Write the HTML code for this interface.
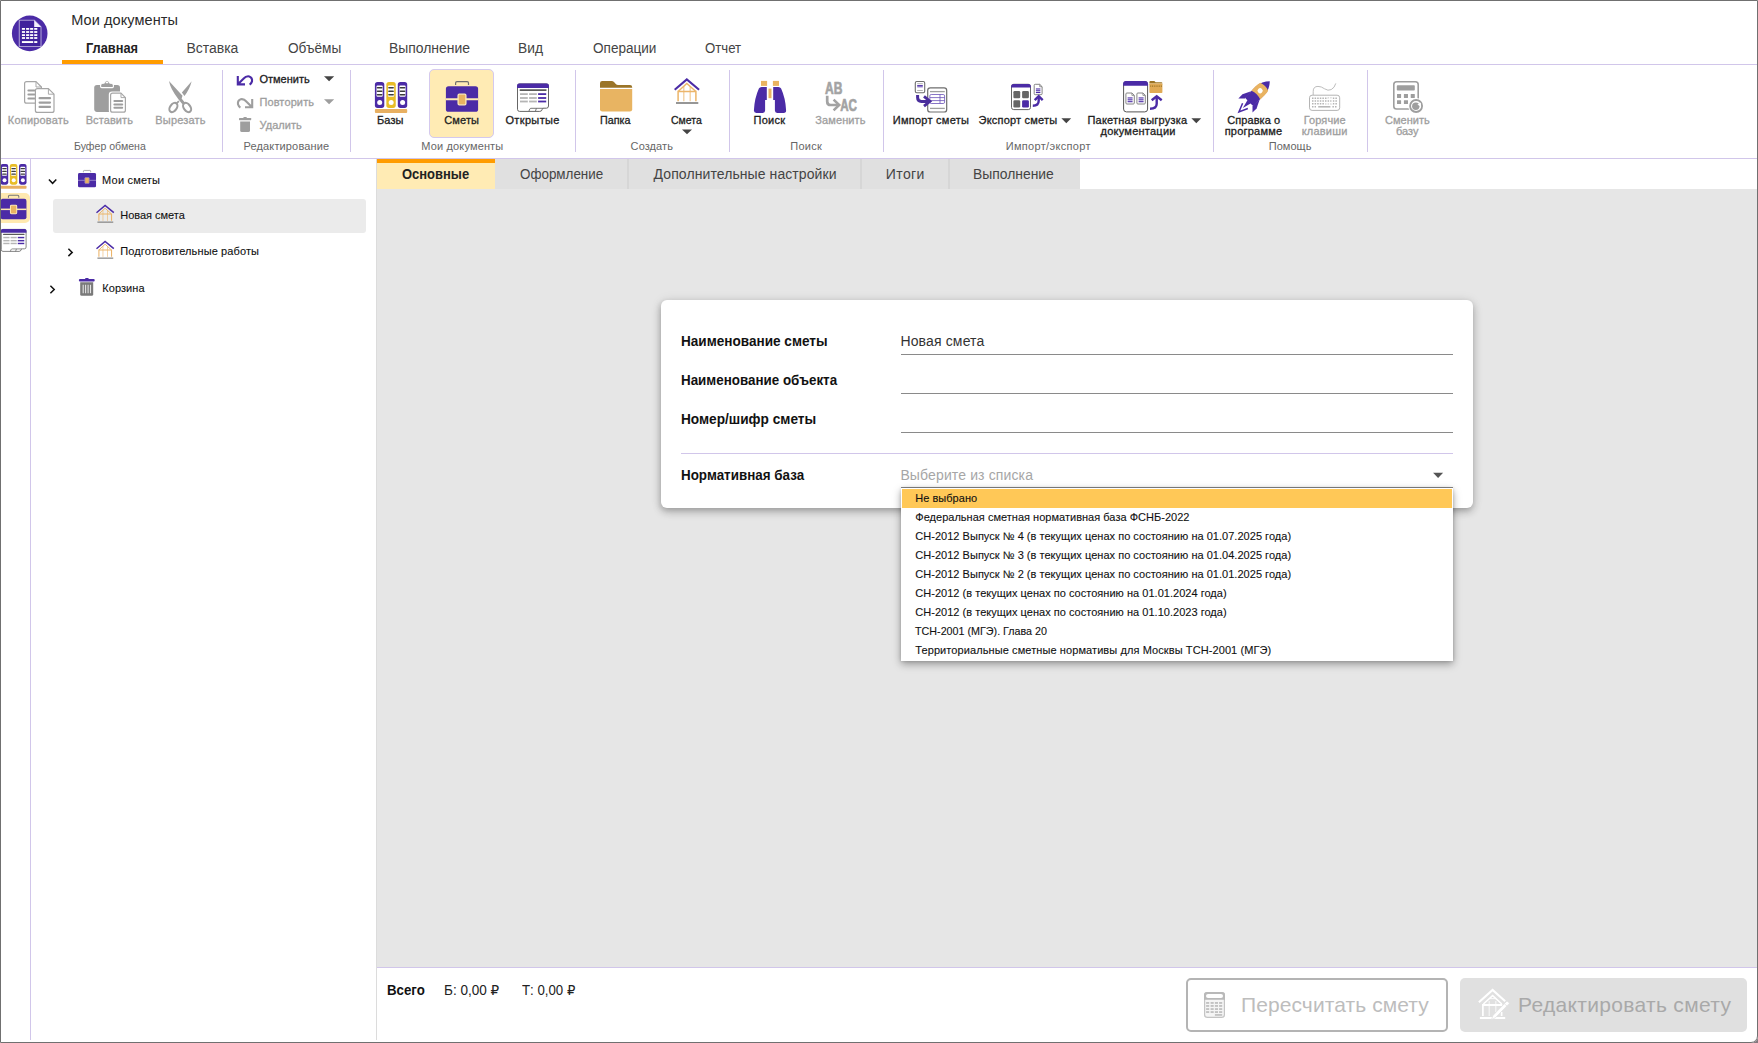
<!DOCTYPE html>
<html lang="ru"><head><meta charset="utf-8"><title>Мои документы</title><style>
html,body{margin:0;padding:0;background:#fff;}
body{width:1758px;height:1043px;position:relative;overflow:hidden;font-family:"Liberation Sans","DejaVu Sans",sans-serif;}
.t{position:absolute;white-space:nowrap;line-height:1;}
.b{position:absolute;box-sizing:border-box;}
</style></head><body>
<div class="b" style="left:1px;top:64px;width:1756px;height:1px;background:#d1c6ea"></div>
<div class="b" style="left:62px;top:60px;width:101px;height:4px;background:#ff9c00"></div>
<div class="b" style="left:1px;top:158px;width:1756px;height:1px;background:#d1c6ea"></div>
<div class="b" style="left:222px;top:70px;width:1px;height:82px;background:#d1c6ea"></div>
<div class="b" style="left:350px;top:70px;width:1px;height:82px;background:#d1c6ea"></div>
<div class="b" style="left:575px;top:70px;width:1px;height:82px;background:#d1c6ea"></div>
<div class="b" style="left:729px;top:70px;width:1px;height:82px;background:#d1c6ea"></div>
<div class="b" style="left:883px;top:70px;width:1px;height:82px;background:#d1c6ea"></div>
<div class="b" style="left:1213px;top:70px;width:1px;height:82px;background:#d1c6ea"></div>
<div class="b" style="left:1367px;top:70px;width:1px;height:82px;background:#d1c6ea"></div>
<div class="b" style="left:429px;top:69px;width:65px;height:69px;background:#ffebb4;border:1px solid #d4c9ee;border-radius:5px"></div>
<div class="b" style="left:30px;top:159px;width:1px;height:881px;background:#d1c6ea"></div>
<div class="b" style="left:1px;top:193px;width:29px;height:30px;background:#ffe9b0;border-radius:0 5px 5px 0"></div>
<div class="b" style="left:53px;top:199px;width:313px;height:34px;background:#ebebeb;border-radius:3px"></div>
<div class="b" style="left:376px;top:159px;width:1px;height:881px;background:#dcdcdc"></div>
<div class="b" style="left:377px;top:159px;width:703px;height:30px;background:#e0e0e0"></div>
<div class="b" style="left:377px;top:189px;width:1380px;height:778px;background:#e6e6e6"></div>
<div class="b" style="left:377px;top:159px;width:118px;height:30px;background:#ffebb4;border-top:4px solid #ff9c00"></div>
<div class="b" style="left:627px;top:159px;width:2px;height:30px;background:#d6d6d6"></div>
<div class="b" style="left:860px;top:159px;width:2px;height:30px;background:#d6d6d6"></div>
<div class="b" style="left:948px;top:159px;width:2px;height:30px;background:#d6d6d6"></div>
<div class="b" style="left:377px;top:967px;width:1380px;height:1px;background:#d1c6ea"></div>
<div class="b" style="left:661px;top:300px;width:812px;height:208px;background:#fff;border-radius:6px;box-shadow:0 4px 8px rgba(0,0,0,.21),0 1px 12px rgba(0,0,0,.10),-1px 2px 5px rgba(0,0,0,.09)"></div>
<div class="b" style="left:901px;top:354px;width:552px;height:1px;background:#8a8a8a"></div>
<div class="b" style="left:901px;top:393px;width:552px;height:1px;background:#8a8a8a"></div>
<div class="b" style="left:901px;top:432px;width:552px;height:1px;background:#8a8a8a"></div>
<div class="b" style="left:901px;top:487px;width:552px;height:1px;background:#8a8a8a"></div>
<div class="b" style="left:681px;top:453px;width:772px;height:1px;background:#d1c6ea"></div>
<div class="b" style="left:901px;top:488px;width:551.7px;height:172.6px;background:#fff;box-shadow:0 3px 8px rgba(0,0,0,.36),0 0 3px rgba(0,0,0,.16)"></div>
<div class="b" style="left:902px;top:488.7px;width:550.2px;height:19px;background:#ffc857"></div>
<div class="b" style="left:1186px;top:978px;width:262px;height:54px;border:2px solid #b4b4b4;border-radius:5px;background:#fff"></div>
<div class="b" style="left:1460px;top:978px;width:287px;height:54px;background:#e0e0e0;border-radius:5px"></div>
<svg class="b" style="left:0;top:0" width="1758" height="1043" viewBox="0 0 1758 1043"><defs><clipPath id="sbclip"><rect x="1" y="159" width="29" height="200"/></clipPath></defs><circle cx="29.7" cy="33.4" r="17.8" fill="#4b2ba6" /><path d="M19.3 20.2H34.2L41 27V46.5H19.3Z" fill="#40229c" stroke="rgba(255,255,255,.55)" stroke-width="1.1" stroke-linejoin="round"/><path d="M34.2 20.2V27H41Z" fill="#f4f1fb" stroke="none" stroke-width="1" /><rect x="21.9" y="28" width="3.1" height="1.8" rx="0" fill="#fff" /><rect x="26.1" y="28" width="3.1" height="1.8" rx="0" fill="#fff" /><rect x="30.1" y="28" width="3.1" height="1.8" rx="0" fill="#fff" /><rect x="34.2" y="28" width="3.1" height="1.8" rx="0" fill="#fff" /><rect x="21.9" y="31.1" width="3.1" height="1.8" rx="0" fill="#fff" /><rect x="26.1" y="31.1" width="3.1" height="1.8" rx="0" fill="#fff" /><rect x="30.1" y="31.1" width="3.1" height="1.8" rx="0" fill="#fff" /><rect x="34.2" y="31.1" width="3.1" height="1.8" rx="0" fill="#fff" /><rect x="21.9" y="34.2" width="3.1" height="1.8" rx="0" fill="#fff" /><rect x="26.1" y="34.2" width="3.1" height="1.8" rx="0" fill="#fff" /><rect x="30.1" y="34.2" width="3.1" height="1.8" rx="0" fill="#fff" /><rect x="34.2" y="34.2" width="3.1" height="1.8" rx="0" fill="#fff" /><rect x="21.9" y="37.1" width="3.1" height="1.8" rx="0" fill="#fff" /><rect x="26.1" y="37.1" width="3.1" height="1.8" rx="0" fill="#fff" /><rect x="30.1" y="37.1" width="3.1" height="1.8" rx="0" fill="#fff" /><rect x="34.2" y="37.1" width="3.1" height="1.8" rx="0" fill="#fff" /><rect x="21.9" y="41.1" width="11.3" height="1.9" rx="0" fill="#fff" /><rect x="34.2" y="41.1" width="3.1" height="1.9" rx="0" fill="#fff" /><path d="M26.6 81.6H36L41.4 87V101.2Q41.4 103.2 39.4 103.2H26.6Q24.6 103.2 24.6 101.2V83.6Q24.6 81.6 26.6 81.6Z" fill="#fff" stroke="#a6a6a6" stroke-width="1.2" stroke-linejoin="round"/><path d="M36 81.6V87H41.4" fill="none" stroke="#a6a6a6" stroke-width="0.96" /><line x1="28.4" y1="90.4" x2="34.4" y2="90.4" stroke="#9e9e9e" stroke-width="2" stroke-linecap="round"/><line x1="28.4" y1="94.5" x2="34.4" y2="94.5" stroke="#9e9e9e" stroke-width="2" stroke-linecap="round"/><line x1="28.4" y1="98.5" x2="34.4" y2="98.5" stroke="#9e9e9e" stroke-width="2" stroke-linecap="round"/><path d="M37.4 88.6H48.4L54 94.2V110.4Q54 112.4 52 112.4H37.4Q35.4 112.4 35.4 110.4V90.6Q35.4 88.6 37.4 88.6Z" fill="#fff" stroke="#a6a6a6" stroke-width="1.2" stroke-linejoin="round"/><path d="M48.4 88.6V94.2H54" fill="none" stroke="#a6a6a6" stroke-width="0.96" /><line x1="39.6" y1="98.2" x2="50" y2="98.2" stroke="#9e9e9e" stroke-width="2.2" stroke-linecap="round"/><line x1="39.6" y1="102.6" x2="50" y2="102.6" stroke="#9e9e9e" stroke-width="2.2" stroke-linecap="round"/><line x1="39.6" y1="106.9" x2="50" y2="106.9" stroke="#9e9e9e" stroke-width="2.2" stroke-linecap="round"/><rect x="94.2" y="84.9" width="25.8" height="27" rx="2.8" fill="#9e9e9e" /><path d="M100.6 86.6V85.4Q100.6 83.2 102.8 83.2H104Q104.6 80.8 107 80.8Q109.4 80.8 110 83.2H111.2Q113.4 83.2 113.4 85.4V86.6Q113.4 87.6 112.4 87.6H101.6Q100.6 87.6 100.6 86.6Z" fill="#9e9e9e" stroke="#fff" stroke-width="1.1" /><rect x="105.6" y="82" width="2.8" height="1.3" rx="0.6" fill="#fff" /><path d="M112 92.6H121L125.6 97.2V110.4Q125.6 112.4 123.6 112.4H112Q110 112.4 110 110.4V94.6Q110 92.6 112 92.6Z" fill="#fff" stroke="#fff" stroke-width="2.4" stroke-linejoin="round"/><path d="M121 92.6V97.2H125.6" fill="none" stroke="#fff" stroke-width="1.92" /><path d="M112.6 93.2H121L125.4 97.6V110.2Q125.4 112.2 123.4 112.2H112.6Q110.6 112.2 110.6 110.2V95.2Q110.6 93.2 112.6 93.2Z" fill="#fff" stroke="#a6a6a6" stroke-width="1.2" stroke-linejoin="round"/><path d="M121 93.2V97.6H125.4" fill="none" stroke="#a6a6a6" stroke-width="0.96" /><line x1="114.4" y1="101" x2="122.2" y2="101" stroke="#9e9e9e" stroke-width="2" stroke-linecap="round"/><line x1="114.4" y1="104.4" x2="122.2" y2="104.4" stroke="#9e9e9e" stroke-width="2" stroke-linecap="round"/><line x1="114.4" y1="107.8" x2="122.2" y2="107.8" stroke="#9e9e9e" stroke-width="2" stroke-linecap="round"/><path d="M169 81L182.5 95.8L181.6 98.4L184.6 102.2L182.4 104.2L178.6 99.4Q170.2 88.8 169 81Z" fill="#9e9e9e" stroke="none" stroke-width="1" /><path d="M191.7 81.2L181.9 92.5L184.4 95.9Q189.6 89.4 191.7 81.2Z" fill="#9e9e9e" stroke="none" stroke-width="1" /><path d="M178.9 101.2L176.6 103.4" fill="none" stroke="#9e9e9e" stroke-width="1.8" /><ellipse cx="173.4" cy="107.5" rx="3.3" ry="5.1" transform="rotate(36 173.4 107.5)" fill="none" stroke="#9e9e9e" stroke-width="2.1"/><ellipse cx="187.1" cy="107.5" rx="3.3" ry="5.1" transform="rotate(-36 187.1 107.5)" fill="none" stroke="#9e9e9e" stroke-width="2.1"/><g transform="translate(236.8 74.8)"><path d="M1 1.2V9.6H8.2M1.4 9.2L6.6 4Q9.4 0.9 12.4 1.6Q15.8 2.8 15.2 6.6Q14.6 8.8 12.8 9.9" fill="none" stroke="#4b2ba6" stroke-width="2.1" stroke-linejoin="miter" stroke-linecap="butt"/></g><g transform="translate(253.2 97.7) scale(-1 1)"><path d="M1 1.2V9.6H8.2M1.4 9.2L6.6 4Q9.4 0.9 12.4 1.6Q15.8 2.8 15.2 6.6Q14.6 8.8 12.8 9.9" fill="none" stroke="#9e9e9e" stroke-width="2.1" stroke-linejoin="miter" stroke-linecap="butt"/></g><path d="M243.2 118.2Q243.2 117 244.4 117H245.8Q247 117 247 118.2Z" fill="#9e9e9e" stroke="none" stroke-width="1" /><rect x="239" y="118" width="12.2" height="2.2" rx="0.6" fill="#9e9e9e" /><path d="M240.2 121.4H250V130.4Q250 132 248.4 132H241.8Q240.2 132 240.2 130.4Z" fill="#9e9e9e" stroke="none" stroke-width="1" /><path d="M324 76.2H334.2L329.1 81.2Z" fill="#444" stroke="none" stroke-width="1" /><path d="M324 99.2H334.2L329.1 104.2Z" fill="#9e9e9e" stroke="none" stroke-width="1" /><g transform="translate(374.9 81.9) scale(1)"><rect x="0" y="0" width="9.4" height="26" rx="2.6" fill="#4b2ba6" /><rect x="1.6" y="3.7" width="6.2" height="11.2" rx="1" fill="#fff" /><line x1="2.6" y1="5.9" x2="6.8" y2="5.9" stroke="#3c3c3c" stroke-width="1.6" stroke-linecap="round"/><line x1="2.6" y1="9.4" x2="6.8" y2="9.4" stroke="#3c3c3c" stroke-width="1.6" stroke-linecap="round"/><line x1="2.6" y1="12.9" x2="6.8" y2="12.9" stroke="#3c3c3c" stroke-width="1.6" stroke-linecap="round"/><circle cx="4.8" cy="20.5" r="2.5" fill="#fff" /><rect x="11.45" y="0" width="9.4" height="26" rx="2.6" fill="#e8bd27" /><rect x="13.05" y="3.7" width="6.2" height="11.2" rx="1" fill="#fff" /><line x1="14.05" y1="5.9" x2="18.25" y2="5.9" stroke="#3c3c3c" stroke-width="1.6" stroke-linecap="round"/><line x1="14.05" y1="9.4" x2="18.25" y2="9.4" stroke="#3c3c3c" stroke-width="1.6" stroke-linecap="round"/><line x1="14.05" y1="12.9" x2="18.25" y2="12.9" stroke="#3c3c3c" stroke-width="1.6" stroke-linecap="round"/><circle cx="16.25" cy="20.5" r="2.5" fill="#fff" /><rect x="22.9" y="0" width="9.4" height="26" rx="2.6" fill="#4b2ba6" /><rect x="24.5" y="3.7" width="6.2" height="11.2" rx="1" fill="#fff" /><line x1="25.5" y1="5.9" x2="29.7" y2="5.9" stroke="#3c3c3c" stroke-width="1.6" stroke-linecap="round"/><line x1="25.5" y1="9.4" x2="29.7" y2="9.4" stroke="#3c3c3c" stroke-width="1.6" stroke-linecap="round"/><line x1="25.5" y1="12.9" x2="29.7" y2="12.9" stroke="#3c3c3c" stroke-width="1.6" stroke-linecap="round"/><circle cx="27.7" cy="20.5" r="2.5" fill="#fff" /><rect x="0" y="27.2" width="32.3" height="3.8" rx="1" fill="#e8b062" /></g><g transform="translate(445.9 81) scale(1)"><path d="M9.7 3.9V2Q9.7 0.6 11.1 0.6H21.2Q22.6 0.6 22.6 2V3.9" fill="none" stroke="#6e6e6e" stroke-width="1.2" /><rect x="0" y="5.2" width="32.2" height="25.6" rx="2.6" fill="#4b2ba6" /><line x1="0" y1="18.3" x2="32.2" y2="18.3" stroke="#ffebb4" stroke-width="1.9" /><rect x="12.2" y="13.2" width="7.8" height="10.6" rx="1.2" fill="#e9b361" stroke="#ffebb4" stroke-width="1.3"/></g><g transform="translate(517 83.4) scale(1)"><path d="M0.5 2.4Q0.5 0.5 2.4 0.5H29.6Q31.5 0.5 31.5 2.4V22.6Q31.5 24.8 29.4 24.8H26.8Q25.5 24.8 25.2 26Q24.8 28 22.8 28H2.6Q0.5 28 0.5 25.9Z" fill="#fff" stroke="#666" stroke-width="1" /><path d="M2.4 0H29.6Q32 0 32 2.4V4.7H0V2.4Q0 0 2.4 0Z" fill="#4b2ba6" stroke="none" stroke-width="1" /><path d="M11.8 28L12.8 25.6Q13.1 24.9 14 24.9H26.4M18.4 28L19.4 24.9" fill="none" stroke="#666" stroke-width="0.9" /><line x1="3.4" y1="6.7" x2="28.8" y2="6.7" stroke="#5a5a5a" stroke-width="1.8" stroke-linecap="round"/><line x1="3" y1="10.7" x2="10.8" y2="10.7" stroke="#b5b5b5" stroke-width="1.8" /><line x1="12.1" y1="10.7" x2="19.8" y2="10.7" stroke="#b5b5b5" stroke-width="1.8" /><line x1="21.1" y1="10.7" x2="29.2" y2="10.7" stroke="#4b2ba6" stroke-width="1.8" /><line x1="3" y1="14.6" x2="10.8" y2="14.6" stroke="#b5b5b5" stroke-width="1.8" /><line x1="12.1" y1="14.6" x2="19.8" y2="14.6" stroke="#b5b5b5" stroke-width="1.8" /><line x1="21.1" y1="14.6" x2="29.2" y2="14.6" stroke="#4b2ba6" stroke-width="1.8" /><line x1="3" y1="18.1" x2="10.8" y2="18.1" stroke="#b5b5b5" stroke-width="1.8" /><line x1="12.1" y1="18.1" x2="19.8" y2="18.1" stroke="#b5b5b5" stroke-width="1.8" /><line x1="21.1" y1="18.1" x2="29.2" y2="18.1" stroke="#4b2ba6" stroke-width="1.8" /></g><path d="M600 87.8V83.2Q600 81 602.2 81H611.6Q613 81 614 82L616 84.2Q616.8 85 618 85H630Q632.2 85 632.2 87.2V87.8Z" fill="#9a7428" stroke="none" stroke-width="1" /><path d="M600 89.1H632.2V109.2Q632.2 111.5 629.9 111.5H602.3Q600 111.5 600 109.2Z" fill="#e8b462" stroke="none" stroke-width="1" /><g transform="translate(674 78.3) scale(1)"><path d="M9.8 8V22.9M16.2 8V22.9" fill="none" stroke="#ecb56a" stroke-width="1.3" opacity="0.65"/><path d="M4.1 13.3L12.8 5.1L21.9 13.3" fill="none" stroke="#ecb56a" stroke-width="1.4" stroke-linejoin="miter"/><path d="M3.4 13.3H22.6M4.1 13.3V22.9M21.9 13.3V22.9" fill="none" stroke="#ecb56a" stroke-width="1.5" /><path d="M0.7 11.4L12.8 1.1L25.1 11.4" fill="none" stroke="#4b2ba6" stroke-width="2.1" stroke-linecap="butt" stroke-linejoin="miter"/><line x1="2" y1="24.7" x2="24.3" y2="24.7" stroke="#7c7c7c" stroke-width="1.6" /></g><path d="M682 129.4H692L687 134.2Z" fill="#444" stroke="none" stroke-width="1" /><rect x="761" y="80.9" width="6.1" height="5" rx="0" fill="#e9b361" /><rect x="772.9" y="80.9" width="6.1" height="5" rx="0" fill="#e9b361" /><rect x="768.5" y="88.6" width="3" height="9.6" rx="0" fill="#e9b361" /><path d="M761.6 86.9H766.8V100H765.1V110.6Q765.1 112.9 762.8 112.9H756.4Q753.7 112.9 753.9 110.2Q754.6 98 758.9 88.6Q759.7 86.9 761.6 86.9Z" fill="#4b2ba6" stroke="none" stroke-width="1" /><path d="M778.4 86.9H773.2V100H774.9V110.6Q774.9 112.9 777.2 112.9H783.6Q786.3 112.9 786.1 110.2Q785.4 98 781.1 88.6Q780.3 86.9 778.4 86.9Z" fill="#4b2ba6" stroke="none" stroke-width="1" /><text x="825" y="93.9" font-family="Liberation Sans, sans-serif" font-weight="700" font-size="16.6" fill="#a3a3a3" stroke="#a3a3a3" stroke-width="0.7" stroke-linejoin="round" textLength="17.4" lengthAdjust="spacingAndGlyphs">AB</text><text x="840.2" y="110.7" font-family="Liberation Sans, sans-serif" font-weight="700" font-size="16.6" fill="#a3a3a3" stroke="#a3a3a3" stroke-width="0.7" stroke-linejoin="round" textLength="16.8" lengthAdjust="spacingAndGlyphs">AC</text><path d="M827.2 95.8V101.4Q827.2 105 830.8 105H838" fill="none" stroke="#a3a3a3" stroke-width="2.7" /><path d="M833.6 99.6L839.2 105L833.6 110.4" fill="none" stroke="#a3a3a3" stroke-width="2.6" /><rect x="915.3" y="81.5" width="9.4" height="11.2" rx="1.4" fill="#fff" stroke="#6e6e6e" stroke-width="1.1"/><line x1="917.2" y1="83.7" x2="922.8" y2="83.7" stroke="#aaa" stroke-width="0.9" /><line x1="917.2" y1="85.5" x2="922.8" y2="85.5" stroke="#4b2ba6" stroke-width="0.9" /><line x1="917.2" y1="86.8" x2="922.8" y2="86.8" stroke="#4b2ba6" stroke-width="0.9" /><line x1="917.2" y1="90.5" x2="922.8" y2="90.5" stroke="#aaa" stroke-width="0.9" /><rect x="927.7" y="87.8" width="19" height="24.2" rx="2.6" fill="#fff" stroke="#6e6e6e" stroke-width="1.2"/><line x1="930" y1="91.6" x2="944.8" y2="91.6" stroke="#a0a0a0" stroke-width="1.3" /><rect x="929.8" y="94.5" width="14.8" height="9" rx="1.4" fill="#fff" stroke="#6a52b8" stroke-width="0.8"/><line x1="929.8" y1="97.6" x2="944.6" y2="97.6" stroke="#6a52b8" stroke-width="0.8" /><line x1="929.8" y1="100.6" x2="944.6" y2="100.6" stroke="#6a52b8" stroke-width="0.8" /><line x1="940" y1="94.5" x2="940" y2="103.5" stroke="#6a52b8" stroke-width="0.8" /><line x1="930" y1="108.4" x2="944.8" y2="108.4" stroke="#a0a0a0" stroke-width="1.3" /><path d="M917.6 95V97.6Q917.6 101.4 921.4 101.4H928" fill="none" stroke="#4a2e9c" stroke-width="3" /><path d="M924 96.4L930 101.3L924 106.2" fill="none" stroke="#4a2e9c" stroke-width="2.8" stroke-linejoin="miter"/><rect x="1011.5" y="84.3" width="19" height="25.3" rx="2.2" fill="#fff" stroke="#666" stroke-width="1"/><path d="M1011 86.6Q1011 84.1 1013.4 84.1H1028.6Q1031 84.1 1031 86.6V87.5H1011Z" fill="#4b2ba6" stroke="none" stroke-width="1" /><rect x="1013.4" y="91.1" width="6.8" height="7.2" rx="1.2" fill="#666" /><rect x="1022.1" y="91.1" width="6.8" height="7.2" rx="1.2" fill="#666" /><rect x="1013.4" y="100.3" width="6.8" height="7.2" rx="1.2" fill="#666" /><rect x="1022.1" y="100.3" width="6.8" height="7.2" rx="1.2" fill="#4b2ba6" /><path d="M1035.2 84.3H1039.7L1042.1 86.7V93.7Q1042.1 94.7 1041.1 94.7H1035.2Q1034.2 94.7 1034.2 93.7V85.3Q1034.2 84.3 1035.2 84.3Z" fill="#fff" stroke="#777" stroke-width="0.9" stroke-linejoin="round"/><path d="M1039.7 84.3V86.7H1042.1" fill="none" stroke="#777" stroke-width="0.72" /><line x1="1035.9" y1="88.98" x2="1040.4" y2="88.98" stroke="#4b2ba6" stroke-width="1.1" /><line x1="1035.9" y1="90.75" x2="1040.4" y2="90.75" stroke="#4b2ba6" stroke-width="1.1" /><line x1="1035.9" y1="92.52" x2="1040.4" y2="92.52" stroke="#4b2ba6" stroke-width="1.1" /><path d="M1032.8 105.8Q1038.7 105.8 1038.7 100.8V97.2" fill="none" stroke="#4b2ba6" stroke-width="2.4" /><path d="M1034.7 100.2L1038.7 96.2L1042.7 100.2" fill="none" stroke="#4b2ba6" stroke-width="2.4" /><rect x="1123.6" y="81.5" width="24" height="30.4" rx="2.8" fill="#fff" stroke="#555" stroke-width="1"/><path d="M1123.1 84Q1123.1 81 1126 81H1145Q1148 81 1148 84V85.8H1123.1Z" fill="#4b2ba6" stroke="none" stroke-width="1" /><path d="M1126.9 93H1131.9L1134.3 95.4V103Q1134.3 104 1133.3 104H1126.9Q1125.9 104 1125.9 103V94Q1125.9 93 1126.9 93Z" fill="#fff" stroke="#777" stroke-width="0.9" stroke-linejoin="round"/><path d="M1131.9 93V95.4H1134.3" fill="none" stroke="#777" stroke-width="0.72" /><line x1="1127.6" y1="97.95" x2="1132.6" y2="97.95" stroke="#4b2ba6" stroke-width="1.1" /><line x1="1127.6" y1="99.82" x2="1132.6" y2="99.82" stroke="#4b2ba6" stroke-width="1.1" /><line x1="1127.6" y1="101.69" x2="1132.6" y2="101.69" stroke="#4b2ba6" stroke-width="1.1" /><path d="M1137.9 93H1142.9L1145.3 95.4V103Q1145.3 104 1144.3 104H1137.9Q1136.9 104 1136.9 103V94Q1136.9 93 1137.9 93Z" fill="#fff" stroke="#777" stroke-width="0.9" stroke-linejoin="round"/><path d="M1142.9 93V95.4H1145.3" fill="none" stroke="#777" stroke-width="0.72" /><line x1="1138.6" y1="97.95" x2="1143.6" y2="97.95" stroke="#4b2ba6" stroke-width="1.1" /><line x1="1138.6" y1="99.82" x2="1143.6" y2="99.82" stroke="#4b2ba6" stroke-width="1.1" /><line x1="1138.6" y1="101.69" x2="1143.6" y2="101.69" stroke="#4b2ba6" stroke-width="1.1" /><path d="M1149.4 83.6V82Q1149.4 81 1150.4 81H1154.4L1155.6 82.2H1161.4Q1162.4 82.2 1162.4 83.2V83.6Z" fill="#9b7425" stroke="none" stroke-width="1" /><rect x="1149.4" y="83.4" width="13" height="9.6" rx="0.8" fill="#e0aa55" /><line x1="1150.2" y1="86.2" x2="1162.4" y2="86.2" stroke="#9b7425" stroke-width="1.2" stroke-dasharray="1 0.8"/><path d="M1150 108.7Q1156.7 108.7 1156.7 103.7V97.2" fill="none" stroke="#4b2ba6" stroke-width="2.4" /><path d="M1151.7 100.2L1156.7 96.2L1161.7 100.2" fill="none" stroke="#4b2ba6" stroke-width="2.4" /><path d="M1061.4 118.2H1071.2L1066.3 123.2Z" fill="#444" stroke="none" stroke-width="1" /><path d="M1191.4 118.2H1201.2L1196.3 123.2Z" fill="#444" stroke="none" stroke-width="1" /><g transform="translate(1254.9 96.0) rotate(45)"><path d="M0 -21C3.4 -17.6 6 -12.6 6 -7V6Q6 8.4 4 8.4H-4Q-6 8.4 -6 6V-7C-6 -12.6 -3.4 -17.6 0 -21Z" fill="#4b2ba6" stroke="none" stroke-width="1" /><path d="M-6 -0.6L-10 7.6V13.4L-5.2 8.6Z" fill="#4b2ba6" stroke="none" stroke-width="1" /><path d="M6 -0.6L10 7.6V13.4L5.2 8.6Z" fill="#4b2ba6" stroke="none" stroke-width="1" /><path d="M-2.4 8L0 17L2.4 8Z" fill="#4b2ba6" stroke="none" stroke-width="1" /><path d="M-5.6 -13.2Q0 -15.4 5.6 -13.2Q6.4 -10 6.4 -7Q6.4 -4 6.2 -1.4Q0 -3.6 -6.2 -1.4Q-6.4 -4 -6.4 -7Q-6.4 -10 -5.6 -13.2Z" fill="#e9b361" stroke="none" stroke-width="1" /><circle cx="0" cy="-7.4" r="2.6" fill="#fff" /><path d="M-3.6 13.8L0 22.6L3.8 13.8" fill="none" stroke="#4b2ba6" stroke-width="1.5" /></g><rect x="1309.5" y="95.2" width="30.2" height="15.2" rx="2.6" fill="#fff" stroke="#b4b4b4" stroke-width="1"/><path d="M1313.2 95V91.4Q1313.2 86.4 1318 86.4Q1321.4 86.4 1324.6 88.8Q1328 91.2 1331.2 89.6Q1334.6 87.8 1335.8 83.4" fill="none" stroke="#b4b4b4" stroke-width="0.9" /><line x1="1312" y1="98.2" x2="1337.4" y2="98.2" stroke="#b4b4b4" stroke-width="1.5" stroke-dasharray="1.5 1.1"/><line x1="1312" y1="101" x2="1337.4" y2="101" stroke="#b4b4b4" stroke-width="1.5" stroke-dasharray="1.5 1.1"/><line x1="1312" y1="103.8" x2="1337.4" y2="103.8" stroke="#b4b4b4" stroke-width="1.5" stroke-dasharray="1.5 1.1"/><line x1="1312" y1="106.8" x2="1316" y2="106.8" stroke="#b4b4b4" stroke-width="1.5" stroke-dasharray="1.5 1.1"/><line x1="1318.2" y1="106.8" x2="1330.4" y2="106.8" stroke="#b4b4b4" stroke-width="1.5" /><line x1="1332.4" y1="106.8" x2="1337.4" y2="106.8" stroke="#b4b4b4" stroke-width="1.5" stroke-dasharray="1.5 1.1"/><path d="M1327.4 98.4H1332V103.8H1324.6" fill="none" stroke="#fff" stroke-width="0.8" /><rect x="1393.8" y="81.8" width="24.4" height="27.2" rx="2.8" fill="#fff" stroke="#9e9e9e" stroke-width="1.6"/><rect x="1396.8" y="85.2" width="18" height="5.4" rx="0.8" fill="#9e9e9e" /><rect x="1397" y="94" width="4.1" height="3.9" rx="0.3" fill="#9e9e9e" /><rect x="1403.9" y="94" width="4.1" height="3.9" rx="0.3" fill="#9e9e9e" /><rect x="1410.7" y="94" width="4.1" height="3.9" rx="0.3" fill="#9e9e9e" /><rect x="1397" y="100.2" width="4.1" height="3.9" rx="0.3" fill="#9e9e9e" /><rect x="1403.9" y="100.2" width="4.1" height="3.9" rx="0.3" fill="#9e9e9e" /><rect x="1410.7" y="100.2" width="4.1" height="3.9" rx="0.3" fill="#9e9e9e" /><circle cx="1416.1" cy="106" r="7.9" fill="#fff" /><circle cx="1416.1" cy="106" r="6" fill="#fff" stroke="#9e9e9e" stroke-width="1.8"/><circle cx="1415.8" cy="106.2" r="3.7" fill="#9e9e9e" /><path d="M1417.4 104.8L1421 102.4L1420.6 106.2Z" fill="#fff" stroke="none" stroke-width="1" /><g clip-path="url(#sbclip)"><g transform="translate(0.7 163.9) scale(0.8)"><rect x="0" y="0" width="9.4" height="26" rx="2.6" fill="#4b2ba6" /><rect x="1.6" y="3.7" width="6.2" height="11.2" rx="1" fill="#fff" /><line x1="2.6" y1="5.9" x2="6.8" y2="5.9" stroke="#3c3c3c" stroke-width="1.6" stroke-linecap="round"/><line x1="2.6" y1="9.4" x2="6.8" y2="9.4" stroke="#3c3c3c" stroke-width="1.6" stroke-linecap="round"/><line x1="2.6" y1="12.9" x2="6.8" y2="12.9" stroke="#3c3c3c" stroke-width="1.6" stroke-linecap="round"/><circle cx="4.8" cy="20.5" r="2.5" fill="#fff" /><rect x="11.45" y="0" width="9.4" height="26" rx="2.6" fill="#e8bd27" /><rect x="13.05" y="3.7" width="6.2" height="11.2" rx="1" fill="#fff" /><line x1="14.05" y1="5.9" x2="18.25" y2="5.9" stroke="#3c3c3c" stroke-width="1.6" stroke-linecap="round"/><line x1="14.05" y1="9.4" x2="18.25" y2="9.4" stroke="#3c3c3c" stroke-width="1.6" stroke-linecap="round"/><line x1="14.05" y1="12.9" x2="18.25" y2="12.9" stroke="#3c3c3c" stroke-width="1.6" stroke-linecap="round"/><circle cx="16.25" cy="20.5" r="2.5" fill="#fff" /><rect x="22.9" y="0" width="9.4" height="26" rx="2.6" fill="#4b2ba6" /><rect x="24.5" y="3.7" width="6.2" height="11.2" rx="1" fill="#fff" /><line x1="25.5" y1="5.9" x2="29.7" y2="5.9" stroke="#3c3c3c" stroke-width="1.6" stroke-linecap="round"/><line x1="25.5" y1="9.4" x2="29.7" y2="9.4" stroke="#3c3c3c" stroke-width="1.6" stroke-linecap="round"/><line x1="25.5" y1="12.9" x2="29.7" y2="12.9" stroke="#3c3c3c" stroke-width="1.6" stroke-linecap="round"/><circle cx="27.7" cy="20.5" r="2.5" fill="#fff" /><rect x="0" y="27.2" width="32.3" height="3.8" rx="1" fill="#e8b062" /></g><g transform="translate(0.7 194.7) scale(0.8)"><path d="M9.7 3.9V2Q9.7 0.6 11.1 0.6H21.2Q22.6 0.6 22.6 2V3.9" fill="none" stroke="#777" stroke-width="1.3" /><rect x="0" y="5.2" width="32.2" height="25.6" rx="2.6" fill="#4b2ba6" /><line x1="0" y1="18.3" x2="32.2" y2="18.3" stroke="#ffe9b0" stroke-width="1.9" /><rect x="12.2" y="13.2" width="7.8" height="10.6" rx="1.2" fill="#e9b361" stroke="#ffe9b0" stroke-width="1.3"/></g><g transform="translate(0.9 229) scale(0.8)"><path d="M0.5 2.4Q0.5 0.5 2.4 0.5H29.6Q31.5 0.5 31.5 2.4V22.6Q31.5 24.8 29.4 24.8H26.8Q25.5 24.8 25.2 26Q24.8 28 22.8 28H2.6Q0.5 28 0.5 25.9Z" fill="#fff" stroke="#666" stroke-width="1" /><path d="M2.4 0H29.6Q32 0 32 2.4V4.7H0V2.4Q0 0 2.4 0Z" fill="#4b2ba6" stroke="none" stroke-width="1" /><path d="M11.8 28L12.8 25.6Q13.1 24.9 14 24.9H26.4M18.4 28L19.4 24.9" fill="none" stroke="#666" stroke-width="0.9" /><line x1="3.4" y1="6.7" x2="28.8" y2="6.7" stroke="#5a5a5a" stroke-width="1.8" stroke-linecap="round"/><line x1="3" y1="10.7" x2="10.8" y2="10.7" stroke="#b5b5b5" stroke-width="1.8" /><line x1="12.1" y1="10.7" x2="19.8" y2="10.7" stroke="#b5b5b5" stroke-width="1.8" /><line x1="21.1" y1="10.7" x2="29.2" y2="10.7" stroke="#4b2ba6" stroke-width="1.8" /><line x1="3" y1="14.6" x2="10.8" y2="14.6" stroke="#b5b5b5" stroke-width="1.8" /><line x1="12.1" y1="14.6" x2="19.8" y2="14.6" stroke="#b5b5b5" stroke-width="1.8" /><line x1="21.1" y1="14.6" x2="29.2" y2="14.6" stroke="#4b2ba6" stroke-width="1.8" /><line x1="3" y1="18.1" x2="10.8" y2="18.1" stroke="#b5b5b5" stroke-width="1.8" /><line x1="12.1" y1="18.1" x2="19.8" y2="18.1" stroke="#b5b5b5" stroke-width="1.8" /><line x1="21.1" y1="18.1" x2="29.2" y2="18.1" stroke="#4b2ba6" stroke-width="1.8" /></g></g><path d="M48.9 179.5L52.6 183.3L56.3 179.5" fill="none" stroke="#111" stroke-width="1.5" /><g transform="translate(78 170.1) scale(0.56)"><path d="M9.7 3.9V2Q9.7 0.6 11.1 0.6H21.2Q22.6 0.6 22.6 2V3.9" fill="none" stroke="#999" stroke-width="1.4" /><rect x="0" y="5.2" width="32.2" height="25.6" rx="2.6" fill="#4b2ba6" /><line x1="0" y1="18.3" x2="32.2" y2="18.3" stroke="#8f7ac9" stroke-width="1.9" /><rect x="12.2" y="13.2" width="7.8" height="10.6" rx="1.2" fill="#e9b361" stroke="#8f7ac9" stroke-width="1.3"/></g><g transform="translate(96 204.6) scale(0.71)"><path d="M9.8 8V22.9M16.2 8V22.9" fill="none" stroke="#ecb56a" stroke-width="1.3" opacity="0.65"/><path d="M4.1 13.3L12.8 5.1L21.9 13.3" fill="none" stroke="#ecb56a" stroke-width="1.4" stroke-linejoin="miter"/><path d="M3.4 13.3H22.6M4.1 13.3V22.9M21.9 13.3V22.9" fill="none" stroke="#ecb56a" stroke-width="1.5" /><path d="M0.7 11.4L12.8 1.1L25.1 11.4" fill="none" stroke="#4b2ba6" stroke-width="2.1" stroke-linecap="butt" stroke-linejoin="miter"/><line x1="2" y1="24.7" x2="24.3" y2="24.7" stroke="#7c7c7c" stroke-width="1.6" /></g><g transform="translate(96 240.6) scale(0.71)"><path d="M9.8 8V22.9M16.2 8V22.9" fill="none" stroke="#ecb56a" stroke-width="1.3" opacity="0.65"/><path d="M4.1 13.3L12.8 5.1L21.9 13.3" fill="none" stroke="#ecb56a" stroke-width="1.4" stroke-linejoin="miter"/><path d="M3.4 13.3H22.6M4.1 13.3V22.9M21.9 13.3V22.9" fill="none" stroke="#ecb56a" stroke-width="1.5" /><path d="M0.7 11.4L12.8 1.1L25.1 11.4" fill="none" stroke="#4b2ba6" stroke-width="2.1" stroke-linecap="butt" stroke-linejoin="miter"/><line x1="2" y1="24.7" x2="24.3" y2="24.7" stroke="#7c7c7c" stroke-width="1.6" /></g><path d="M68.4 248.7L72.2 252.4L68.4 256.1" fill="none" stroke="#111" stroke-width="1.5" /><path d="M50.4 285.8L54.2 289.5L50.4 293.2" fill="none" stroke="#111" stroke-width="1.5" /><path d="M85.1 279.4V278.7Q85.1 277.9 85.9 277.9H87.9Q88.7 277.9 88.7 278.7V279.4Z" fill="#4b2ba6" stroke="none" stroke-width="1" /><rect x="78.9" y="279" width="15.8" height="2.5" rx="1.1" fill="#4b2ba6" /><path d="M80.2 282.2H93.2V294.4Q93.2 295.8 91.8 295.8H81.6Q80.2 295.8 80.2 294.4Z" fill="#7a7a7a" stroke="none" stroke-width="1" /><line x1="83.2" y1="284.8" x2="83.2" y2="293.2" stroke="#e4e4e4" stroke-width="1.1" /><line x1="85.6" y1="284.8" x2="85.6" y2="293.2" stroke="#e4e4e4" stroke-width="1.1" /><line x1="88.1" y1="284.8" x2="88.1" y2="293.2" stroke="#e4e4e4" stroke-width="1.1" /><line x1="90.5" y1="284.8" x2="90.5" y2="293.2" stroke="#e4e4e4" stroke-width="1.1" /><path d="M1433.1 472.8H1443.1L1438.1 478Z" fill="#555" stroke="none" stroke-width="1" /><rect x="1204.6" y="992.6" width="19.8" height="24.8" rx="2.6" fill="#f5f5f5" stroke="#c4c4c4" stroke-width="1.2"/><path d="M1204 995.2Q1204 992 1207.2 992H1221.8Q1225 992 1225 995.2V999.8H1204Z" fill="#b9b9b9" stroke="none" stroke-width="1" /><rect x="1206" y="994" width="17" height="4" rx="2" fill="#fff" /><rect x="1206.1" y="1002.1" width="3.1" height="1.7" rx="0" fill="#bdbdbd" /><rect x="1210.6" y="1002.1" width="3.1" height="1.7" rx="0" fill="#bdbdbd" /><rect x="1214.9" y="1002.1" width="3.1" height="1.7" rx="0" fill="#bdbdbd" /><rect x="1219.1" y="1002.1" width="3.1" height="1.7" rx="0" fill="#bdbdbd" /><rect x="1206.1" y="1005.1" width="3.1" height="1.7" rx="0" fill="#bdbdbd" /><rect x="1210.6" y="1005.1" width="3.1" height="1.7" rx="0" fill="#bdbdbd" /><rect x="1214.9" y="1005.1" width="3.1" height="1.7" rx="0" fill="#bdbdbd" /><rect x="1219.1" y="1005.1" width="3.1" height="1.7" rx="0" fill="#bdbdbd" /><rect x="1206.1" y="1008.2" width="3.1" height="1.7" rx="0" fill="#bdbdbd" /><rect x="1210.6" y="1008.2" width="3.1" height="1.7" rx="0" fill="#bdbdbd" /><rect x="1214.9" y="1008.2" width="3.1" height="1.7" rx="0" fill="#bdbdbd" /><rect x="1219.1" y="1008.2" width="3.1" height="1.7" rx="0" fill="#bdbdbd" /><rect x="1206.1" y="1011.2" width="3.1" height="1.7" rx="0" fill="#bdbdbd" /><rect x="1210.6" y="1011.2" width="3.1" height="1.7" rx="0" fill="#bdbdbd" /><rect x="1214.9" y="1011.2" width="3.1" height="1.7" rx="0" fill="#bdbdbd" /><rect x="1219.1" y="1011.2" width="3.1" height="1.7" rx="0" fill="#bdbdbd" /><rect x="1214.9" y="1014.2" width="7.3" height="1.5" rx="0" fill="#b9b9b9" /><path d="M1478.9 1002.2L1492.6 989.9L1505.2 1001.2" fill="none" stroke="#fff" stroke-width="2.1" stroke-linejoin="miter"/><path d="M1483.4 1004L1492.6 995.6L1501.8 1004" fill="none" stroke="#fff" stroke-width="1.5" /><line x1="1482" y1="1005" x2="1502.4" y2="1005" stroke="#fff" stroke-width="2" /><line x1="1482.9" y1="1004" x2="1482.9" y2="1016" stroke="#fff" stroke-width="1.7" /><line x1="1501.6" y1="1012" x2="1501.6" y2="1016" stroke="#fff" stroke-width="1.7" /><line x1="1489.2" y1="1001" x2="1489.2" y2="1016" stroke="#fff" stroke-width="1.1" opacity="0.75"/><line x1="1495.8" y1="1001" x2="1495.8" y2="1012" stroke="#fff" stroke-width="1.1" opacity="0.75"/><line x1="1489.2" y1="998.6" x2="1496" y2="998.6" stroke="#fff" stroke-width="1.1" opacity="0.8"/><line x1="1479.9" y1="1018" x2="1505.2" y2="1018" stroke="#fff" stroke-width="2" /><path d="M1507 1001L1509.6 1003.2L1495.6 1017.6L1491.4 1019.8L1493 1015.4Z" fill="#fff" stroke="#e0e0e0" stroke-width="0.7" /><line x1="1504.2" y1="1003.6" x2="1507" y2="1006" stroke="#e0e0e0" stroke-width="0.7" /></svg>
<span class="t" style="left:71.30px;top:13.00px;font-size:14.5px;font-weight:400;color:#2a2a2a;letter-spacing:0.080px;">Мои документы</span>
<span class="t" style="left:86.30px;top:41.00px;font-size:14px;font-weight:700;color:#222;letter-spacing:0.000px;transform:scaleX(0.9143);transform-origin:0 0;">Главная</span>
<span class="t" style="left:186.40px;top:41.00px;font-size:14px;font-weight:400;color:#444;letter-spacing:-0.008px;">Вставка</span>
<span class="t" style="left:287.50px;top:41.00px;font-size:14px;font-weight:400;color:#444;letter-spacing:0.000px;transform:scaleX(0.9743);transform-origin:0 0;">Объёмы</span>
<span class="t" style="left:388.51px;top:41.00px;font-size:14px;font-weight:400;color:#444;letter-spacing:0.000px;transform:scaleX(0.9938);transform-origin:0 0;">Выполнение</span>
<span class="t" style="left:518.41px;top:41.00px;font-size:14px;font-weight:400;color:#444;letter-spacing:0.000px;transform:scaleX(0.9852);transform-origin:0 0;">Вид</span>
<span class="t" style="left:593.40px;top:41.00px;font-size:14px;font-weight:400;color:#444;letter-spacing:0.000px;transform:scaleX(0.9680);transform-origin:0 0;">Операции</span>
<span class="t" style="left:704.70px;top:41.00px;font-size:14px;font-weight:400;color:#444;letter-spacing:0.000px;transform:scaleX(0.9430);transform-origin:0 0;">Отчет</span>
<span class="t" style="left:7.85px;top:115.00px;font-size:11px;font-weight:400;color:#9e9e9e;letter-spacing:0.184px;-webkit-text-stroke:0.3px #9e9e9e;">Копировать</span>
<span class="t" style="left:85.70px;top:115.00px;font-size:11px;font-weight:400;color:#9e9e9e;letter-spacing:0.086px;-webkit-text-stroke:0.3px #9e9e9e;">Вставить</span>
<span class="t" style="left:155.30px;top:115.00px;font-size:11px;font-weight:400;color:#9e9e9e;letter-spacing:0.172px;-webkit-text-stroke:0.3px #9e9e9e;">Вырезать</span>
<span class="t" style="left:259.40px;top:74.00px;font-size:11px;font-weight:400;color:#212121;letter-spacing:0.010px;-webkit-text-stroke:0.3px #212121;">Отменить</span>
<span class="t" style="left:259.40px;top:97.00px;font-size:11px;font-weight:400;color:#9e9e9e;letter-spacing:0.118px;-webkit-text-stroke:0.3px #9e9e9e;">Повторить</span>
<span class="t" style="left:259.60px;top:120.00px;font-size:11px;font-weight:400;color:#9e9e9e;letter-spacing:0.022px;-webkit-text-stroke:0.3px #9e9e9e;">Удалить</span>
<span class="t" style="left:377.00px;top:115.00px;font-size:11px;font-weight:400;color:#212121;letter-spacing:0.115px;-webkit-text-stroke:0.3px #212121;">Базы</span>
<span class="t" style="left:444.20px;top:115.00px;font-size:11px;font-weight:400;color:#212121;letter-spacing:0.151px;-webkit-text-stroke:0.3px #212121;">Сметы</span>
<span class="t" style="left:505.40px;top:115.00px;font-size:11px;font-weight:400;color:#212121;letter-spacing:0.361px;-webkit-text-stroke:0.3px #212121;">Открытые</span>
<span class="t" style="left:599.70px;top:115.00px;font-size:11px;font-weight:400;color:#212121;letter-spacing:0.000px;-webkit-text-stroke:0.3px #212121;transform:scaleX(0.9771);transform-origin:0 0;">Папка</span>
<span class="t" style="left:670.70px;top:115.00px;font-size:11px;font-weight:400;color:#212121;letter-spacing:0.000px;-webkit-text-stroke:0.3px #212121;transform:scaleX(0.9526);transform-origin:0 0;">Смета</span>
<span class="t" style="left:753.50px;top:115.00px;font-size:11px;font-weight:400;color:#212121;letter-spacing:0.283px;-webkit-text-stroke:0.3px #212121;">Поиск</span>
<span class="t" style="left:815.20px;top:115.00px;font-size:11px;font-weight:400;color:#9e9e9e;letter-spacing:0.129px;-webkit-text-stroke:0.3px #9e9e9e;">Заменить</span>
<span class="t" style="left:892.80px;top:115.00px;font-size:11px;font-weight:400;color:#212121;letter-spacing:0.258px;-webkit-text-stroke:0.3px #212121;">Импорт сметы</span>
<span class="t" style="left:978.60px;top:115.00px;font-size:11px;font-weight:400;color:#212121;letter-spacing:0.205px;-webkit-text-stroke:0.3px #212121;">Экспорт сметы</span>
<span class="t" style="left:1087.50px;top:115.00px;font-size:11px;font-weight:400;color:#212121;letter-spacing:0.193px;-webkit-text-stroke:0.3px #212121;">Пакетная выгрузка</span>
<span class="t" style="left:1100.50px;top:126.00px;font-size:11px;font-weight:400;color:#212121;letter-spacing:0.247px;-webkit-text-stroke:0.3px #212121;">документации</span>
<span class="t" style="left:1227.30px;top:115.00px;font-size:11px;font-weight:400;color:#212121;letter-spacing:0.062px;-webkit-text-stroke:0.3px #212121;">Справка о</span>
<span class="t" style="left:1224.70px;top:126.00px;font-size:11px;font-weight:400;color:#212121;letter-spacing:0.217px;-webkit-text-stroke:0.3px #212121;">программе</span>
<span class="t" style="left:1303.80px;top:115.00px;font-size:11px;font-weight:400;color:#9e9e9e;letter-spacing:0.073px;-webkit-text-stroke:0.3px #9e9e9e;">Горячие</span>
<span class="t" style="left:1301.70px;top:126.00px;font-size:11px;font-weight:400;color:#9e9e9e;letter-spacing:0.202px;-webkit-text-stroke:0.3px #9e9e9e;">клавиши</span>
<span class="t" style="left:1385.00px;top:115.00px;font-size:11px;font-weight:400;color:#9e9e9e;letter-spacing:0.020px;-webkit-text-stroke:0.3px #9e9e9e;">Сменить</span>
<span class="t" style="left:1396.00px;top:126.00px;font-size:11px;font-weight:400;color:#9e9e9e;letter-spacing:-0.021px;-webkit-text-stroke:0.3px #9e9e9e;">базу</span>
<span class="t" style="left:73.70px;top:141.00px;font-size:11px;font-weight:400;color:#666;letter-spacing:0.000px;transform:scaleX(0.9600);transform-origin:0 0;">Буфер обмена</span>
<span class="t" style="left:243.50px;top:141.00px;font-size:11px;font-weight:400;color:#666;letter-spacing:0.140px;">Редактирование</span>
<span class="t" style="left:421.30px;top:141.00px;font-size:11px;font-weight:400;color:#666;letter-spacing:0.146px;">Мои документы</span>
<span class="t" style="left:630.60px;top:141.00px;font-size:11px;font-weight:400;color:#666;letter-spacing:0.088px;">Создать</span>
<span class="t" style="left:790.20px;top:141.00px;font-size:11px;font-weight:400;color:#666;letter-spacing:0.283px;">Поиск</span>
<span class="t" style="left:1005.70px;top:141.00px;font-size:11px;font-weight:400;color:#666;letter-spacing:0.322px;">Импорт/экспорт</span>
<span class="t" style="left:1268.70px;top:141.00px;font-size:11px;font-weight:400;color:#666;letter-spacing:0.049px;">Помощь</span>
<span class="t" style="left:102.10px;top:175.00px;font-size:11px;font-weight:400;color:#111;letter-spacing:0.193px;-webkit-text-stroke:0.1px #111;">Мои сметы</span>
<span class="t" style="left:120.30px;top:210.00px;font-size:11px;font-weight:400;color:#111;letter-spacing:-0.024px;-webkit-text-stroke:0.1px #111;">Новая смета</span>
<span class="t" style="left:120.30px;top:246.00px;font-size:11px;font-weight:400;color:#111;letter-spacing:0.114px;-webkit-text-stroke:0.1px #111;">Подготовительные работы</span>
<span class="t" style="left:102.30px;top:283.00px;font-size:11px;font-weight:400;color:#111;letter-spacing:0.053px;-webkit-text-stroke:0.1px #111;">Корзина</span>
<span class="t" style="left:402.40px;top:167.00px;font-size:14px;font-weight:700;color:#222;letter-spacing:0.000px;transform:scaleX(0.9257);transform-origin:0 0;">Основные</span>
<span class="t" style="left:520.10px;top:167.00px;font-size:14px;font-weight:400;color:#444;letter-spacing:0.000px;transform:scaleX(0.9574);transform-origin:0 0;">Оформление</span>
<span class="t" style="left:653.60px;top:167.00px;font-size:14px;font-weight:400;color:#444;letter-spacing:0.084px;">Дополнительные настройки</span>
<span class="t" style="left:885.80px;top:167.00px;font-size:14px;font-weight:400;color:#444;letter-spacing:0.398px;">Итоги</span>
<span class="t" style="left:973.11px;top:167.00px;font-size:14px;font-weight:400;color:#444;letter-spacing:0.000px;transform:scaleX(0.9913);transform-origin:0 0;">Выполнение</span>
<span class="t" style="left:681.20px;top:334.00px;font-size:14px;font-weight:700;color:#111;letter-spacing:0.000px;transform:scaleX(0.9694);transform-origin:0 0;">Наименование сметы</span>
<span class="t" style="left:900.40px;top:334.00px;font-size:14px;font-weight:400;color:#333;letter-spacing:0.147px;">Новая смета</span>
<span class="t" style="left:681.20px;top:373.00px;font-size:14px;font-weight:700;color:#111;letter-spacing:0.000px;transform:scaleX(0.9561);transform-origin:0 0;">Наименование объекта</span>
<span class="t" style="left:681.20px;top:412.00px;font-size:14px;font-weight:700;color:#111;letter-spacing:0.000px;transform:scaleX(0.9751);transform-origin:0 0;">Номер/шифр сметы</span>
<span class="t" style="left:681.20px;top:468.00px;font-size:14px;font-weight:700;color:#111;letter-spacing:0.000px;transform:scaleX(0.9578);transform-origin:0 0;">Нормативная база</span>
<span class="t" style="left:900.40px;top:468.00px;font-size:14px;font-weight:400;color:#a6a6a6;letter-spacing:0.132px;">Выберите из списка</span>
<span class="t" style="left:915.30px;top:493.00px;font-size:11px;font-weight:400;color:#111;letter-spacing:0.025px;-webkit-text-stroke:0.1px #111;">Не выбрано</span>
<span class="t" style="left:915.30px;top:512.00px;font-size:11px;font-weight:400;color:#111;letter-spacing:0.019px;-webkit-text-stroke:0.1px #111;">Федеральная сметная нормативная база ФСНБ-2022</span>
<span class="t" style="left:915.30px;top:531.00px;font-size:11px;font-weight:400;color:#111;letter-spacing:0.027px;-webkit-text-stroke:0.1px #111;">СН-2012 Выпуск № 4 (в текущих ценах по состоянию на 01.07.2025 года)</span>
<span class="t" style="left:915.30px;top:550.00px;font-size:11px;font-weight:400;color:#111;letter-spacing:0.027px;-webkit-text-stroke:0.1px #111;">СН-2012 Выпуск № 3 (в текущих ценах по состоянию на 01.04.2025 года)</span>
<span class="t" style="left:915.30px;top:569.00px;font-size:11px;font-weight:400;color:#111;letter-spacing:0.027px;-webkit-text-stroke:0.1px #111;">СН-2012 Выпуск № 2 (в текущих ценах по состоянию на 01.01.2025 года)</span>
<span class="t" style="left:915.30px;top:588.00px;font-size:11px;font-weight:400;color:#111;letter-spacing:0.023px;-webkit-text-stroke:0.1px #111;">СН-2012 (в текущих ценах по состоянию на 01.01.2024 года)</span>
<span class="t" style="left:915.30px;top:607.00px;font-size:11px;font-weight:400;color:#111;letter-spacing:0.023px;-webkit-text-stroke:0.1px #111;">СН-2012 (в текущих ценах по состоянию на 01.10.2023 года)</span>
<span class="t" style="left:915.30px;top:626.00px;font-size:11px;font-weight:400;color:#111;letter-spacing:0.000px;-webkit-text-stroke:0.1px #111;transform:scaleX(0.9760);transform-origin:0 0;">ТСН-2001 (МГЭ). Глава 20</span>
<span class="t" style="left:915.30px;top:645.00px;font-size:11px;font-weight:400;color:#111;letter-spacing:0.091px;-webkit-text-stroke:0.1px #111;">Территориальные сметные нормативы для Москвы ТСН-2001 (МГЭ)</span>
<span class="t" style="left:387.00px;top:983.00px;font-size:14px;font-weight:700;color:#111;letter-spacing:0.000px;transform:scaleX(0.9484);transform-origin:0 0;">Всего</span>
<span class="t" style="left:444.43px;top:983.00px;font-size:14px;font-weight:400;color:#222;letter-spacing:0.000px;transform:scaleX(0.9678);transform-origin:0 0;">Б: 0,00 ₽</span>
<span class="t" style="left:521.90px;top:983.00px;font-size:14px;font-weight:400;color:#222;letter-spacing:0.000px;transform:scaleX(0.9457);transform-origin:0 0;">Т: 0,00 ₽</span>
<span class="t" style="left:1241.00px;top:994.00px;font-size:21px;font-weight:400;color:#bdbdbd;letter-spacing:0.092px;">Пересчитать смету</span>
<span class="t" style="left:1518.00px;top:994.00px;font-size:21px;font-weight:400;color:#a9a9a9;letter-spacing:0.318px;">Редактировать смету</span>
<div class="b" style="left:0px;top:0px;width:1758px;height:1043px;border:1px solid #707070;border-bottom-right-radius:7px;pointer-events:none;box-shadow:0 0 0 8px #85787e"></div>
</body></html>
